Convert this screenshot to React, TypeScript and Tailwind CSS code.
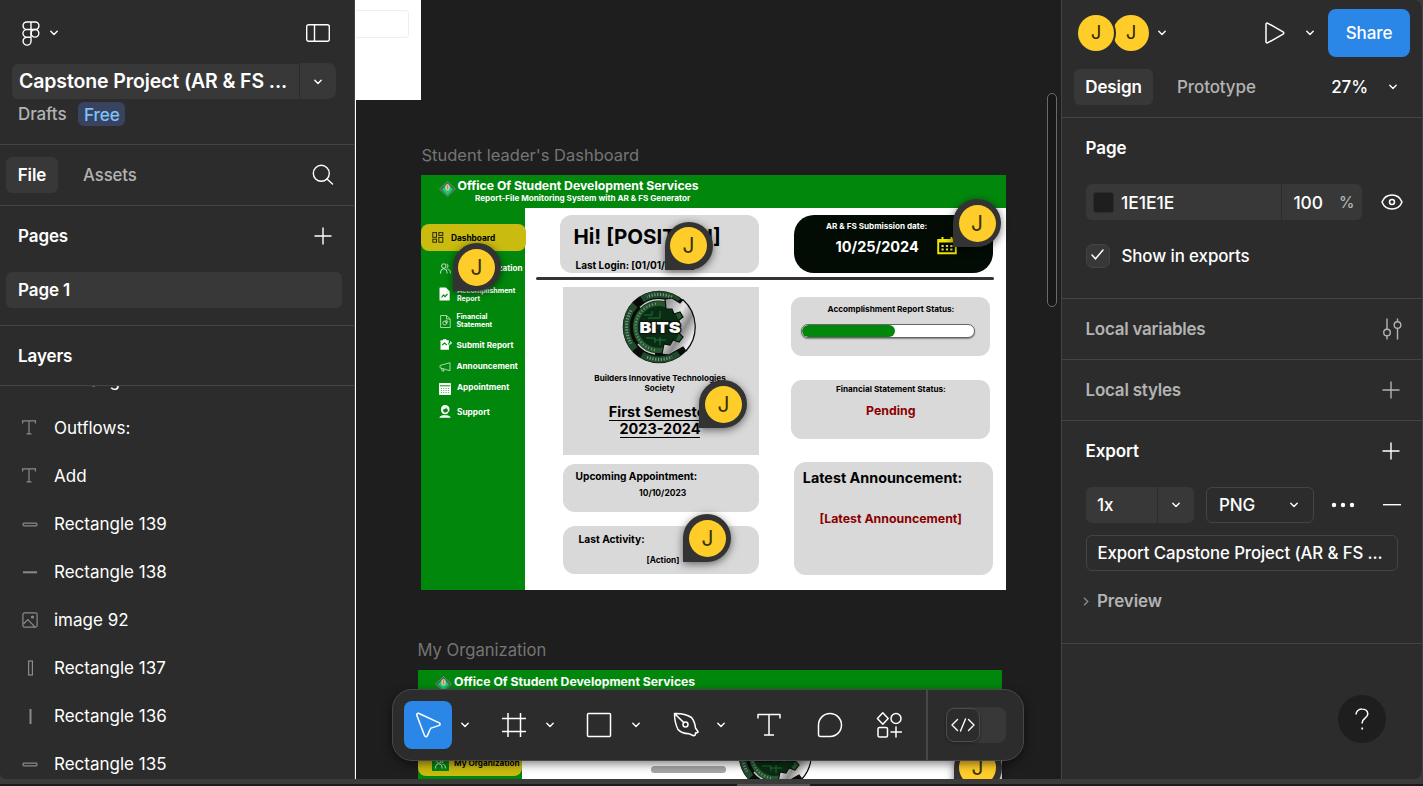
import React from 'react';
import clsx from 'clsx';

type P = { className?: string };

const Chevron = ({ className }: P) => (
  <svg className={clsx('shrink-0', className)} width="10" height="6" viewBox="0 0 10 6" fill="none" stroke="currentColor" strokeWidth="1.4" strokeLinecap="round" strokeLinejoin="round">
    <path d="M1.8 1.200 5 4.400 8.200 1.200" />
  </svg>
);

const Plus = ({ className }: P) => (
  <svg className={clsx('shrink-0', className)} width="18" height="18" viewBox="0 0 18 18" fill="none" stroke="currentColor" strokeWidth="1.4">
    <path d="M9 .5v17M.5 9h17" />
  </svg>
);

const T = ({ className, children }: P & { children: React.ReactNode }) => (
  <span className={clsx('pt-0.5 whitespace-nowrap', className)}>{children}</span>
);

const FigmaMark = () => (
  <svg width="18" height="25" viewBox="0 0 18 25" fill="none" stroke="#fff" strokeWidth="1.4">
    <path d="M4.800 1h8.400a3.750 3.750 0 0 1 0 7.500H4.800a3.750 3.750 0 0 1 0-7.500ZM9 1v15.500M9 8.500H4.800a3.850 3.850 0 0 0 0 7.700H9v4a3.950 3.950 0 1 1-4.200-4" />
    <circle cx="13" cy="12.300" r="3.850" />
  </svg>
);

const PanelIcon = () => (
  <svg width="24" height="18" viewBox="0 0 24 18" fill="none" stroke="#fff" strokeWidth="1.4">
    <rect x=".7" y=".7" width="22.600" height="16.600" rx="2" />
    <path d="M8.500 1v16" />
  </svg>
);

const SearchIcon = () => (
  <svg width="22" height="22" viewBox="0 0 22 22" fill="none" stroke="#fff" strokeWidth="1.4" strokeLinecap="round">
    <circle cx="9.300" cy="9.300" r="8" />
    <path d="m15 15 5.500 5" />
  </svg>
);

type Kind = 'text' | 'wide' | 'flat' | 'image' | 'tall' | 'line';

const LayerIcon = ({ kind }: { kind: Kind }) => (
  <svg width="16" height="16" viewBox="0 0 16 16" fill="none" stroke="#8a8a8a" strokeWidth="1.2">
    {kind === 'text' && <path d="M.6 3.500V.9h12.800v2.600M7 .9v13M4.500 13.900h5" />}
    {kind === 'wide' && <rect x="1" y="7.200" width="14" height="2.600" rx="1" />}
    {kind === 'flat' && <path d="M1 8.300h14" strokeWidth="2" />}
    {kind === 'tall' && <rect x="6.600" y="1" width="3.800" height="14" />}
    {kind === 'line' && <path d="M8.500 1v15" strokeWidth="2" />}
    {kind === 'image' && (
      <>
        <rect x=".9" y=".9" width="14.200" height="14.200" rx="1.500" />
        <path d="m1.500 12 4.300-4.500L13 15" />
        <circle cx="10.500" cy="5" r="1" fill="#8a8a8a" />
      </>
    )}
  </svg>
);

const layers: { name: string; kind: Kind }[] = [
  { name: 'Rectangle 140', kind: 'wide' },
  { name: 'Outflows:', kind: 'text' },
  { name: 'Add', kind: 'text' },
  { name: 'Rectangle 139', kind: 'wide' },
  { name: 'Rectangle 138', kind: 'flat' },
  { name: 'image 92', kind: 'image' },
  { name: 'Rectangle 137', kind: 'tall' },
  { name: 'Rectangle 136', kind: 'line' },
  { name: 'Rectangle 135', kind: 'wide' },
];

function LeftPanel() {
  return (
    <aside className="flex h-full w-[356px] shrink-0 flex-col rounded-bl-md border-r border-white bg-[#2c2c2c] text-[17px] tracking-[-0.1px] text-white">
      <div className="flex h-full flex-col overflow-hidden rounded-bl-md border-r border-[#444]">
        <header className="h-[145px] shrink-0 border-b border-[#444]">
          <div className="flex h-16 items-center pt-0.5 pr-6 pl-[22px]">
            <FigmaMark />
            <Chevron className="ml-[9px]" />
            <span className="ml-auto"><PanelIcon /></span>
          </div>
          <div className="flex h-[35px] gap-px pl-3">
            <div className="flex w-[287px] items-center rounded-l-md bg-[#383838] pl-[7px] text-[19.500px] leading-none font-semibold tracking-[-0.120px] whitespace-nowrap">Capstone Project (AR &amp; FS ...</div>
            <div className="-mt-px flex w-9 items-center justify-center rounded-r-lg bg-[#383838] pt-px"><Chevron /></div>
          </div>
          <div className="mt-[3px] flex h-6 items-center pl-[18px]">
            <T className="font-medium text-[#b3b3b3]">Drafts</T>
            <span className="ml-3 flex h-6 items-center rounded-md bg-[#394360] px-[5.500px] text-[17.200px] font-medium text-[#7cc4f8]"><T>Free</T></span>
          </div>
        </header>
        <nav className="flex h-[61px] shrink-0 items-center border-b border-[#444] pr-5 pl-1.5">
          <span className="flex h-9 w-[52px] items-center justify-center rounded-md bg-[#383838] font-semibold"><T>File</T></span>
          <T className="ml-[25px] text-[16.800px] font-medium text-[#b3b3b3]">Assets</T>
          <span className="ml-auto"><SearchIcon /></span>
        </nav>
        <section className="h-[120px] shrink-0 border-b border-[#444]">
          <div className="flex h-[60px] items-center justify-between pr-[22px] pl-[18px] font-semibold">
            <T>Pages</T>
            <Plus />
          </div>
          <div className="mt-1.5 ml-1.5 flex h-9 w-[336px] items-center rounded-md bg-[#383838] pl-3 font-semibold"><T>Page 1</T></div>
        </section>
        <div className="flex h-[60px] shrink-0 items-center border-b border-[#444] pl-[18px] font-semibold"><T>Layers</T></div>
        <div className="flex min-h-0 flex-1 flex-col justify-start overflow-hidden">
          <div className="-mt-[30px]">
            {layers.map((l) => (
              <div key={l.name} className="flex h-12 items-center gap-4 pl-[22px]">
                <LayerIcon kind={l.kind} />
                <T className="tracking-normal">{l.name}</T>
              </div>
            ))}
          </div>
        </div>
      </div>
    </aside>
  );
}

const Pin = ({ className }: P) => (
  <div className={clsx('absolute flex size-12 items-center justify-center rounded-full rounded-bl-[2px] bg-[#333] shadow-[0_2px_8px_rgba(0,0,0,0.55)]', className)}>
    <div className="flex size-[37px] items-center justify-center rounded-full bg-[#ffcd29] text-[21px] leading-none text-[#3a3208]">J</div>
  </div>
);

const Label = ({ className, children }: P & { children: React.ReactNode }) => (
  <div className={clsx('absolute leading-none font-bold whitespace-nowrap', className)}>{children}</div>
);

const Crest = ({ className }: P) => (
  <svg className={clsx('absolute', className)} width="17" height="16" viewBox="0 0 17 16">
    <path d="M8.500.5 16.500 8 8.500 15.500.5 8Z" fill="#3c6b50" stroke="#7d9080" strokeWidth=".8" />
    <path d="M8.500 2.500 14 8.500 8.500 14.300 3 8.500Z" fill="#12d070" />
    <ellipse cx="8.500" cy="6.500" rx="2.200" ry="3.200" fill="#c9d3c0" />
    <path d="M8.500 4v4.500" stroke="#e8862a" strokeWidth="1.500" />
  </svg>
);

const Emblem = ({ className, id }: P & { id: string }) => (
  <svg className={clsx('absolute', className)} width="74" height="74" viewBox="-37 -37 74 74">
    <defs>
      <linearGradient id={id} x1="0" y1="0" x2="1" y2="1">
        <stop offset="0" stopColor="#777" />
        <stop offset=".4" stopColor="#e8e8e8" />
        <stop offset=".6" stopColor="#8c8c8c" />
        <stop offset=".8" stopColor="#eee" />
        <stop offset="1" stopColor="#999" />
      </linearGradient>
    </defs>
    <circle r="36.300" fill="#080d09" />
    <path d="M19.500-26A32.500 32.500 0 0 0-17-27.700M-24-22A32.500 32.500 0 0 0-24 22M-17 27.700A32.500 32.500 0 0 0 19.500 26" fill="none" stroke="#1f4a2c" strokeWidth="6.500" />
    <path d="M13-29.800A32.500 32.500 0 0 0-12-30.200M-28-16.500A32.500 32.500 0 0 0-28 16.500M-12 30.200A32.500 32.500 0 0 0 13 29.800" fill="none" stroke="#b9cbbd" strokeWidth="3" strokeDasharray="1.200 1.600" opacity=".6" />
    <circle r="23.500" fill="#0b2c14" stroke="#24592f" strokeWidth="5" />
    <path d="M-3-23.300A23.500 23.500 0 0 0-3 23.300" fill="none" stroke="#a5bba9" strokeWidth="2.200" strokeDasharray="1.100 2" opacity=".6" />
    <path d="M6-26.500A27.200 27.200 0 0 0-19-19.500M-21 17A27.200 27.200 0 0 0-4 27" fill="none" stroke="#c3cdc5" strokeWidth="1.400" />
    <path d="M6-28 7-18l6 0 2 5 6-2 3 5-4 3 1 7-1 6 4 4-4 5-6-2-3 5-6-1-2 10 7 1 14-8 3 4A36.300 36.300 0 0 0 24-27.300l-3 3.300-8-5Z" fill={`url(#${id})`} stroke="#0a0f0b" strokeWidth="1.200" />
    <path d="M-15-12h8v-4M-11-9h12v-7M-13 11h9v5M1 10v8M-5 13h12" stroke="#1d7a34" fill="none" strokeWidth=".9" />
    <text x="1" y="6" textAnchor="middle" textLength="41" lengthAdjust="spacingAndGlyphs" fontFamily="Inter" fontWeight="900" fontSize="15" fill="#fff" stroke="#10150f" strokeWidth="2.500" paintOrder="stroke">BITS</text>
  </svg>
);

const GridIcon = ({ className }: P) => (
  <svg className={clsx('absolute', className)} width="12" height="11" viewBox="0 0 12 11" fill="none" stroke="#2a2a00" strokeWidth="1">
    <rect x=".8" y=".6" width="3.700" height="4.700" /><rect x="6.800" y=".6" width="4" height="2.800" />
    <rect x=".8" y="7.200" width="3.700" height="3" /><rect x="6.800" y="5.400" width="4" height="4.800" />
  </svg>
);

const PeopleIcon = ({ className }: P) => (
  <svg className={clsx('absolute', className)} width="11" height="11" viewBox="0 0 11 11" fill="none" stroke="#d8f0d8" strokeWidth=".9">
    <circle cx="3.800" cy="3" r="2.200" /><path d="M6.500.9a2.200 2.200 0 0 1 0 4.200M.6 10.500V9a3.200 3.200 0 0 1 6.400 0v1.500M7.500 6.200c2 .2 2.800 1.300 2.800 2.800v1.500" />
  </svg>
);

const ReportIcon = ({ className }: P) => (
  <svg className={clsx('absolute', className)} width="11" height="14" viewBox="0 0 11 14">
    <path d="M1 .5h5.800L10.700 4.300V13.500H.5V1Z" fill="#fff" /><path d="M2.500 10.500 4.500 8l1.500 1.600L8.500 7" stroke="#03880c" strokeWidth="1.200" fill="none" />
  </svg>
);

const StatementIcon = ({ className }: P) => (
  <svg className={clsx('absolute', className)} width="11" height="13" viewBox="0 0 11 13" fill="none" stroke="#cfe8cf" strokeWidth=".8">
    <path d="M.6.500h6l3.600 3.400v8.600H.6ZM6.500.6V4h3.500" /><circle cx="4.800" cy="8" r="2" /><circle cx="6.500" cy="6.700" r="1.200" />
  </svg>
);

const SubmitIcon = ({ className }: P) => (
  <svg className={clsx('absolute', className)} width="12" height="11" viewBox="0 0 12 11">
    <path d="M.5 1.200h2.600V.2h3.400v1h2.300V3l-1 3 1.200-.5v5.200H.5Z" fill="#fff" /><path d="M9 6.500c.2-2 .8-2.600 2.500-2.600M10 2.400l1.600 1.500L10 5.400" stroke="#fff" fill="none" /><path d="m2.200 6 2.300-2L6.800 6" stroke="#03880c" strokeWidth="1.100" fill="none" />
  </svg>
);

const HornIcon = ({ className }: P) => (
  <svg className={clsx('absolute', className)} width="12" height="10" viewBox="0 0 12 10" fill="none" stroke="#cfe8cf" strokeWidth=".8">
    <path d="M1 3.500 11 .7v8L1 5.800ZM2.500 6.300l.6 2.700h2l-.5-2" />
  </svg>
);

const CalcIcon = ({ className }: P) => (
  <svg className={clsx('absolute', className)} width="12" height="12" viewBox="0 0 12 12">
    <rect width="12" height="12" rx=".8" fill="#fff" />
    <path d="M.8 2.800h10.400" stroke="#03880c" strokeWidth="1" /><path d="M2 5.500h8M2 7.500h8M2 9.500h8" stroke="#03880c" strokeWidth=".7" strokeDasharray="1 1.300" />
  </svg>
);

const SupportIcon = ({ className }: P) => (
  <svg className={clsx('absolute', className)} width="12" height="13" viewBox="0 0 12 13">
    <path d="M6.200 0A4.300 4.300 0 0 0 2 4.500C2 7.500 3.500 9.300 6 9.300c1.800 0 3-.8 3.500-2M6.200 0A4.300 4.300 0 0 1 10.500 4.500c0 1.500-.5 2.500-1.500 3" fill="#fff" /><path d="M4 4.500c1.500 0 2.600-.6 3.200-1.700.6 1.500 1.200 1.800 1.600 1.800C8.700 6.500 7.800 7.600 6.300 7.600 5 7.600 4 6.500 4 4.500Z" fill="#03880c" />
    <path d="M.3 12.800C.8 10.700 3 10.200 6 10.200s5.200.5 5.700 2.600Z" fill="#fff" />
  </svg>
);

const CalendarIcon = ({ className }: P) => (
  <svg className={clsx('absolute', className)} width="20" height="18" viewBox="0 0 20 18">
    <path d="M1.200 3h17.600v13.300H1.200Z" fill="none" stroke="#f2e600" strokeWidth="1.900" />
    <path d="M1 3h18v2.500H1Z" fill="#f2e600" /><path d="M5.500 0v4M14.500 0v4" stroke="#f2e600" strokeWidth="2" />
    <path d="M4.500 9h11.500M4.500 12.500h11.500" stroke="#e6dc4a" strokeWidth="2" strokeDasharray="2.200 2.200" />
  </svg>
);

function DashboardFrame() {
  return (
    <div className="absolute top-[175px] left-[65px] h-[415.400px] w-[584.500px] bg-white text-black">
      <div className="absolute inset-y-0 left-0 w-[104px] bg-[#02870d]" />
      <div className="absolute inset-x-0 top-0 h-[33px] bg-[#02870d]" />
      <Crest className="top-[5.500px] left-[18px]" />
      <Label className="top-[5px] left-[36.500px] text-[12.220px] text-white">Office Of Student Development Services</Label>
      <Label className="top-[19px] left-[54px] text-[8.150px] text-white">Report-File Monitoring System with AR &amp; FS Generator</Label>

      <div className="absolute top-[49px] left-0 h-[26.500px] w-[105px] rounded-lg bg-[#c9bb10]" />
      <GridIcon className="top-[57px] left-[10.500px]" />
      <Label className="top-[58.500px] left-[30px] text-[8.300px]">Dashboard</Label>
      <PeopleIcon className="top-[88px] left-[18.500px]" />
      <Label className="top-[89px] left-9 text-[8.150px] text-white">My Organization</Label>
      <ReportIcon className="top-[112px] left-[18px]" />
      <Label className="top-[112px] left-9 text-[7.050px] text-white">Accomplishment</Label>
      <Label className="top-[120px] left-9 text-[7.050px] text-white">Report</Label>
      <StatementIcon className="top-[140px] left-[18.500px]" />
      <Label className="top-[138px] left-[35.500px] text-[7.050px] text-white">Financial</Label>
      <Label className="top-[146.400px] left-[35.500px] text-[7.050px] text-white">Statement</Label>
      <SubmitIcon className="top-[164px] left-[18.500px]" />
      <Label className="top-[166px] left-[35.500px] text-[8.200px] text-white">Submit Report</Label>
      <HornIcon className="top-[187px] left-[18px]" />
      <Label className="top-[187px] left-[35.500px] text-[8.150px] text-white">Announcement</Label>
      <CalcIcon className="top-[208px] left-[18px]" />
      <Label className="top-[208px] left-9 text-[8.200px] text-white">Appointment</Label>
      <SupportIcon className="top-[230px] left-[18px]" />
      <Label className="top-[233px] left-9 text-[8.300px] text-white">Support</Label>

      <div className="absolute top-10 left-[139px] h-[58px] w-[199px] rounded-[12px] bg-[#d9d9d9]" />
      <Label className="top-[52px] left-[152.500px] text-[20.500px]">Hi! [POSITION]</Label>
      <Label className="top-[85px] left-[154.500px] text-[10px]">Last Login: [01/01/2023]</Label>
      <div className="absolute top-10 left-[373px] h-[58px] w-[199px] rounded-[20px] bg-[#020c04]" />
      <Label className="top-[47px] left-[405px] text-[8.120px] text-white">AR &amp; FS Submission date:</Label>
      <Label className="top-[65px] left-[414.500px] text-[14.500px] text-white">10/25/2024</Label>
      <CalendarIcon className="top-[62px] left-[516px]" />
      <div className="absolute top-[102px] left-[115px] h-[3px] w-[458px] rounded-full bg-[#333]" />

      <div className="absolute top-28 left-[142px] h-[168px] w-[196px] bg-[#d9d9d9]" />
      <Emblem id="steel-a" className="top-[115px] left-[200.500px]" />
      <Label className="top-[199px] left-[142px] w-[194px] text-center text-[8.150px]">Builders Innovative Technologies</Label>
      <Label className="top-[209px] left-[142px] w-[193px] text-center text-[8.150px]">Society</Label>
      <Label className="top-[230px] left-[142.500px] w-[193px] text-center text-[14.400px]"><span className="border-b border-black">First Semester</span></Label>
      <Label className="top-[247px] left-[142.500px] w-[193px] text-center text-[14.400px]"><span className="border-b border-black">2023-2024</span></Label>

      <div className="absolute top-[289px] left-[142px] h-[47.500px] w-[196px] rounded-xl bg-[#d9d9d9]" />
      <Label className="top-[296px] left-[154.500px] text-[10.200px]">Upcoming Appointment:</Label>
      <Label className="top-[314px] left-[218px] text-[8.500px]">10/10/2023</Label>
      <div className="absolute top-[351px] left-[142px] h-[47.500px] w-[196px] rounded-xl bg-[#d9d9d9]" />
      <Label className="top-[359px] left-[157.500px] text-[10.250px]">Last Activity:</Label>
      <Label className="top-[380.500px] left-[225.500px] text-[8.350px]">[Action]</Label>

      <div className="absolute top-[122.300px] left-[370.400px] h-[59px] w-[198.500px] rounded-[11px] bg-[#d9d9d9]" />
      <Label className="top-[130px] left-[406.500px] text-[8.180px]">Accomplishment Report Status:</Label>
      <div className="absolute top-[148.500px] left-[380px] h-[14px] w-[174px] overflow-hidden rounded-full border border-[#666] bg-white shadow-[0_1px_1.500px_rgba(0,0,0,0.4)]">
        <div className="h-full w-[93px] rounded-full bg-[#02870d]" />
      </div>
      <div className="absolute top-[205.300px] left-[370.400px] h-[59px] w-[198.500px] rounded-[11px] bg-[#d9d9d9]" />
      <Label className="top-[210px] left-[415px] text-[8.200px]">Financial Statement Status:</Label>
      <Label className="top-[230px] left-[445px] text-[12.350px] text-[#8b0000]">Pending</Label>
      <div className="absolute top-[287px] left-[373px] h-[113px] w-[199px] rounded-[12px] bg-[#d9d9d9]" />
      <Label className="top-[296px] left-[381.800px] text-[14.350px]">Latest Announcement:</Label>
      <Label className="top-[338px] left-[398.500px] text-[12.350px] text-[#8b0000]">[Latest Announcement]</Label>
    </div>
  );
}

function OrganizationFrame() {
  return (
    <div className="absolute top-[670px] left-[62px] h-[109px] w-[584px] overflow-hidden bg-white text-black">
      <div className="absolute inset-y-0 left-0 w-[104px] bg-[#02870d]" />
      <div className="absolute inset-x-0 top-0 h-[33px] bg-[#02870d]" />
      <Crest className="top-[6px] left-[17px]" />
      <Label className="top-[5.500px] left-9 text-[12.220px] text-white">Office Of Student Development Services</Label>
      <div className="absolute top-[80px] left-0 h-[26px] w-[103.500px] rounded-lg bg-[#c9bb10]" />
      <div className="absolute top-[84px] left-[14px] h-[17px] w-[17px] bg-[#02870d]" />
      <PeopleIcon className="top-[88px] left-[17px]" />
      <Label className="top-[88.500px] left-9 text-[8.150px]">My Organization</Label>
      <Emblem id="steel-b" className="top-[48px] left-[320px]" />
    </div>
  );
}

const Tool = ({ className, children }: P & { children: React.ReactNode }) => (
  <div className={clsx('flex size-12 shrink-0 items-center justify-center rounded-lg', className)}>
    <svg width="26" height="26" viewBox="0 0 26 26" fill="none" stroke="#fff" strokeWidth="1.500" strokeLinejoin="round" strokeLinecap="round">{children}</svg>
  </div>
);

function Toolbar() {
  return (
    <div className="absolute top-[689px] left-[36px] flex h-[72px] w-[632px] items-center rounded-[20px] border border-[#484848] bg-[#2c2c2c] pl-[11px] text-white shadow-[0_3px_10px_rgba(0,0,0,0.5)]">
      <Tool className="bg-[#2a87e8]"><path d="M1.800 3.300 9.600 23.800c.5 1.300 2.200 1.300 2.700.1l3-6.900c.2-.5.5-.8.900-.9l8-2.700c1.200-.4 1.200-2 .1-2.500L3.500 1.300c-1.100-.4-2.100.9-1.700 2Z" /></Tool>
      <Chevron className="ml-2" />
      <Tool className="ml-5"><path d="M7 1v24M19.500 1v24M1 6.500h24M1 19.500h24" strokeLinecap="butt" /></Tool>
      <Chevron className="ml-[7px]" />
      <Tool className="ml-5"><rect x="1.500" y="1.500" width="23" height="23" rx="1" /></Tool>
      <Chevron className="ml-2" />
      <Tool className="ml-[21px]">
        <path d="M1.500 1.500C7 1.300 13 2 18.500 5.500c2.500 2.800 3.500 6.500 4 10.500l2.700 4-1.300 1-1.200-.2-.7 2.500-1.400.4L16 21.800C10.500 21.500 7 20 5 17.500 2.500 12.500 1.500 7 1.500 1.500ZM2 2l8.800 8.600" />
        <circle cx="12.500" cy="12.500" r="2.500" />
      </Tool>
      <Chevron className="ml-[6px]" />
      <Tool className="ml-[19px]"><path d="M2 6.500V2.500h22v4M13 2.500V23M8 23h10" strokeLinecap="butt" /></Tool>
      <Tool className="ml-[12.500px]"><path d="M13 1.500A11.500 11.500 0 0 1 13 24.500H3.500a2 2 0 0 1-2-2V13A11.500 11.500 0 0 1 13 1.500Z" /></Tool>
      <Tool className="ml-[11.500px]">
        <path d="m6.800.8 5.400 5.700-5.400 5.700L1.400 6.500Z" /><circle cx="20" cy="6.500" r="5" />
        <rect x="2" y="15.500" width="9.500" height="9.500" rx="1.500" /><path d="M20 15v10M15 20h10.500" />
      </Tool>
      <div className="ml-[12.500px] h-full w-0.5 bg-[#484848]" />
      <div className="ml-[18px] flex h-9 w-[60px] items-center rounded-lg bg-[#383838]">
        <div className="flex size-[34px] items-center justify-center rounded-lg border border-[#4c4c4c] bg-[#2c2c2c] shadow-[0_1px_3px_rgba(0,0,0,0.4)]">
          <svg width="24" height="14" viewBox="0 0 24 14" fill="none" stroke="#fff" strokeWidth="1.400" strokeLinecap="round" strokeLinejoin="round"><path d="M6.500 1.500 1 7l5.500 5.500M17.500 1.500 23 7l-5.500 5.500M14.500 1l-5 12" /></svg>
        </div>
      </div>
    </div>
  );
}

function Canvas() {
  return (
    <main className="relative h-full min-w-0 flex-1 overflow-hidden bg-[#1e1e1e]">
      <div className="absolute top-0 left-0 h-[100px] w-[65.400px] bg-white">
        <div className="absolute top-2.5 -left-1 h-[28px] w-[57px] rounded-[3px] border border-[#eee]" />
      </div>
      <div className="absolute top-[146px] left-[65.500px] text-[16.500px] leading-[18px] whitespace-nowrap text-[#757575]">Student leader&apos;s Dashboard</div>
      <DashboardFrame />
      <div className="absolute top-[641px] left-[61.500px] text-[16.600px] leading-[18px] whitespace-nowrap text-[#757575]">My Organization</div>
      <OrganizationFrame />
      <Pin className="top-[243px] left-[96.500px]" />
      <Pin className="top-[221.500px] left-[308.500px]" />
      <Pin className="top-[199.400px] left-[597px]" />
      <Pin className="top-[380px] left-[343.400px]" />
      <Pin className="top-[514px] left-[327.400px]" />
      <Pin className="top-[743.500px] left-[597.500px]" />
      <div className="absolute top-[766px] left-[295px] h-[7px] w-[75px] rounded-full bg-[#a6a6a6]" />
      <div className="absolute top-[93px] left-[691px] h-[214px] w-[10px] rounded-full border-[1.500px] border-[#6a6a6a] bg-[#171717]" />
      <Toolbar />
    </main>
  );
}

const Face = ({ className }: P) => (
  <div className={clsx('flex size-9 items-center justify-center rounded-full bg-[#ffcd29] text-[18px] leading-none text-[#2c2400]', className)}>J</div>
);

function RightPanel() {
  return (
    <aside className="flex h-full w-[362px] shrink-0 flex-col rounded-r-lg border-x border-[#444] bg-[#2c2c2c] text-[17px] tracking-[-0.1px] text-white">
      <header className="h-[118px] shrink-0 border-b border-[#444]">
        <div className="flex h-[66px] items-center pl-4">
          <Face className="z-10 ring-2 ring-[#2c2c2c]" />
          <Face className="-ml-px" />
          <Chevron className="ml-2" />
          <svg className="ml-[98px]" width="20" height="22" viewBox="0 0 20 22" fill="none" stroke="#fff" strokeWidth="1.500" strokeLinejoin="round"><path d="M1 2.200v17.600c0 1 1 1.400 1.900.9l15.200-8.500c.9-.6.9-1.800 0-2.400L2.900 1.300C2 .8 1 1.300 1 2.200Z" /></svg>
          <Chevron className="ml-5" />
          <div className="ml-[13px] flex h-12 w-[82px] items-center justify-center rounded-lg bg-[#2a87e8] font-medium"><T>Share</T></div>
        </div>
        <div className="mt-[3px] flex h-9 items-center pl-3 font-medium">
          <span className="flex h-9 w-[79px] items-center justify-center rounded-md bg-[#383838] font-semibold"><T>Design</T></span>
          <T className="ml-6 text-[#b3b3b3]">Prototype</T>
          <T className="ml-auto">27%</T>
          <Chevron className="mr-6 ml-5" />
        </div>
      </header>
      <section className="h-[181px] shrink-0 border-b border-[#444] pl-[23.500px] font-medium">
        <div className="flex h-[60px] items-center font-semibold"><T>Page</T></div>
        <div className="mt-1.5 flex h-9 items-center">
          <div className="flex h-9 w-[195px] items-center rounded-l-md bg-[#383838] pl-[7px]">
            <span className="size-[21px] rounded-[3px] border border-[#2c2c2c] bg-[#1e1e1e]" />
            <T className="ml-[7.500px] text-[17.600px]">1E1E1E</T>
          </div>
          <div className="ml-px flex h-9 w-20 items-center rounded-r-md bg-[#383838] pl-3 text-[17.400px]">
            <T>100</T><T className="ml-4 text-[15.500px] text-[#b3b3b3]">%</T>
          </div>
          <svg className="ml-[19px]" width="22" height="16" viewBox="0 0 22 16" fill="none" stroke="#fff" strokeWidth="1.500"><path d="M1 8c1.700-4.300 5.300-7 10-7s8.300 2.700 10 7c-1.700 4.300-5.300 7-10 7S2.700 12.300 1 8Z" /><circle cx="11" cy="8" r="2.500" /></svg>
        </div>
        <div className="mt-6 flex h-6 items-center">
          <span className="flex size-6 items-center justify-center rounded-[7px] border border-[#444] bg-[#383838] pb-1">
            <svg width="13" height="11" viewBox="0 0 13 11" fill="none" stroke="#fff" strokeWidth="1.500" strokeLinecap="round"><path d="m1 6 3.500 3.800L12 1" /></svg>
          </span>
          <T className="ml-3 text-[16.900px]">Show in exports</T>
        </div>
      </section>
      <section className="flex h-[61px] shrink-0 items-center justify-between border-b border-[#444] pr-5 pl-[23.500px] font-semibold tracking-[-0.260px] text-[#b3b3b3]">
        <T>Local variables</T>
        <svg width="20" height="22" viewBox="0 0 20 22" fill="none" stroke="currentColor" strokeWidth="1.400"><path d="M5 .500v10.500M5 18v3.500M15.500.500v3M15.500 10.500v11" /><circle cx="5" cy="14.500" r="3.300" /><circle cx="15.500" cy="7" r="3.300" /></svg>
      </section>
      <section className="flex h-[61px] shrink-0 items-center justify-between border-b border-[#444] pr-[22px] pl-[23.500px] font-semibold tracking-[-0.220px] text-[#b3b3b3]">
        <T>Local styles</T>
        <Plus />
      </section>
      <section className="h-[223px] shrink-0 border-b border-[#444] pl-6 font-medium">
        <div className="flex h-[60px] items-center justify-between pr-[22px] font-semibold">
          <T className="-ml-[0.500px]">Export</T>
          <Plus />
        </div>
        <div className="mt-1.5 flex h-9 items-center">
          <div className="flex h-9 w-[71px] items-center rounded-l-md bg-[#383838] pl-[11px]"><T>1x</T></div>
          <div className="ml-px flex h-9 w-9 items-center justify-center rounded-r-md bg-[#383838]"><Chevron /></div>
          <div className="ml-3 flex h-9 w-[108px] items-center justify-between rounded-md border border-[#444] pr-3.5 pl-3"><T>PNG</T><Chevron /></div>
          <svg className="ml-[17px]" width="24" height="6" viewBox="0 0 24 6" fill="#fff"><circle cx="3" cy="3" r="2.200" /><circle cx="12" cy="3" r="2.200" /><circle cx="21" cy="3" r="2.200" /></svg>
          <svg className="ml-[28px]" width="18" height="2" viewBox="0 0 18 2"><path d="M0 .700h18" stroke="#fff" strokeWidth="1.400" /></svg>
        </div>
        <div className="mt-3 flex h-9 w-[312px] items-center rounded-md border border-[#444] pl-[10.500px] text-[16.800px] whitespace-nowrap"><T>Export Capstone Project (AR &amp; FS ...</T></div>
        <div className="mt-3 -ml-[3px] flex h-9 items-center font-semibold text-[#b3b3b3]">
          <svg width="6" height="9" viewBox="0 0 6 9" fill="none" stroke="#8c8c8c" strokeWidth="1.300"><path d="m1 .7 3.800 3.800L1 8.300" /></svg>
          <T className="ml-2">Preview</T>
        </div>
      </section>
      <div className="mt-auto mr-9 mb-9 flex size-12 items-center justify-center self-end rounded-full bg-[#1e1e1e]">
        <svg width="14" height="22" viewBox="0 0 14 22" fill="none" stroke="#fff" strokeWidth="1.500"><path d="M1 6.500A5.800 5.800 0 0 1 7 1c3.300 0 5.800 2 5.800 5 0 4-5.600 4.300-5.600 8.500v1" /><path d="M7.200 19.500v2" strokeWidth="1.800" /></svg>
      </div>
    </aside>
  );
}

export default function App() {
  return (
    <div className="flex h-[786px] w-[1423px] flex-col overflow-hidden bg-[#3b3b3b] font-['Inter',sans-serif] antialiased">
      <div className="flex h-[779px] shrink-0">
        <LeftPanel />
        <Canvas />
        <RightPanel />
      </div>
      <div className="mt-[5px] flex h-0.5 bg-[#1a1a1c] pl-[737px]">
        <div className="w-[73px] bg-[#555]" />
      </div>
    </div>
  );
}
